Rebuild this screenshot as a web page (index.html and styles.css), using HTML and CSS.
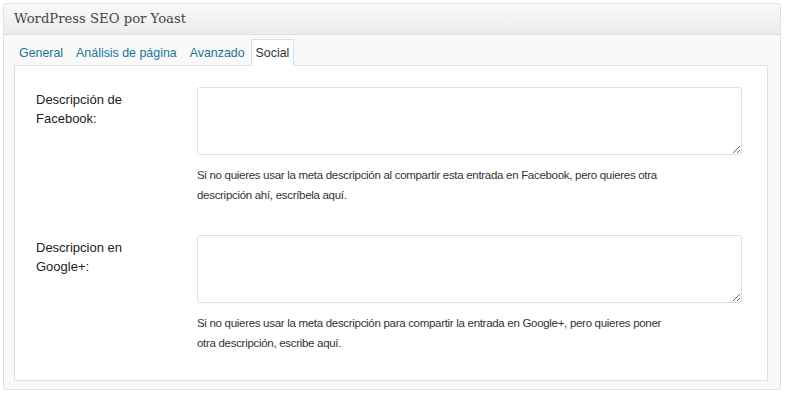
FILE: index.html
```html
<!DOCTYPE html>
<html lang="es">
<head>
<meta charset="utf-8">
<title>WordPress SEO por Yoast</title>
<link rel="stylesheet" href="styles.css">
</head>
<body>
<div class="postbox">
  <h3 class="hndle">WordPress SEO por Yoast</h3>
  <div class="inside">
    <ul class="tabs">
      <li class="tab"><a href="#">General</a></li>
      <li class="tab"><a href="#">Análisis de página</a></li>
      <li class="tab"><a href="#">Avanzado</a></li>
      <li class="tab active"><a href="#">Social</a></li>
    </ul>
    <div class="panel">
      <div class="row">
        <label class="label">Descripción de Facebook:</label>
        <div class="field">
          <textarea class="textarea"></textarea>
          <p class="desc">Si no quieres usar la meta descripción al compartir esta entrada en Facebook, pero quieres otra<br>descripción ahí, escríbela aquí.</p>
        </div>
      </div>
      <div class="row">
        <label class="label">Descripcion en Google+:</label>
        <div class="field">
          <textarea class="textarea"></textarea>
          <p class="desc">Si no quieres usar la meta descripción para compartir la entrada en Google+, pero quieres poner<br>otra descripción, escribe aquí.</p>
        </div>
      </div>
    </div>
  </div>
</div>
</body>
</html>
```

FILE: styles.css
```css
* { box-sizing: border-box; }
html, body { margin: 0; padding: 0; background: #fff; }
body {
  font-family: "Liberation Sans", Arial, sans-serif;
  font-size: 12px;
  color: #333;
}
.postbox {
  margin: 3px 0 0 3px;
  width: 778px;
  height: 387px;
  border: 1px solid #dfdfdf;
  border-radius: 3px;
  background: #f5f5f5;
  display: flex;
  flex-direction: column;
}
.hndle {
  flex: none;
  margin: 0;
  height: 31px;
  padding: 7px 10px 0;
  font-family: "DejaVu Serif", Georgia, serif;
  font-weight: normal;
  font-size: 13.2px;
  line-height: 16px;
  color: #464646;
  background: linear-gradient(to bottom, #f9f9f9, #ececec);
  border-bottom: 1px solid #dfdfdf;
}
.inside {
  flex: 1;
  min-height: 0;
  padding: 4px 12px 8px 10px;
  display: flex;
  flex-direction: column;
  background: #f9f9f9;
}
.tabs {
  flex: none;
  list-style: none;
  margin: 0;
  padding: 0;
  display: flex;
  height: 26px;
}
.tab {
  margin-right: 3px;
  padding: 6px 4px 0;
  border: 1px solid transparent;
  border-bottom: 0;
  line-height: 15px;
  font-size: 12.4px;
}
.tab a {
  color: #21759b;
  text-decoration: none;
}
.tab.active {
  margin-left: -2px;
  background: #fff;
  border-color: #dfdfdf;
  margin-bottom: -1px;
  height: 27px;
  position: relative;
  z-index: 1;
}
.tab.active a { color: #333; }
.panel {
  flex: 1;
  min-height: 0;
  background: #fff;
  border: 1px solid #dfdfdf;
  padding: 21px 25px 0 21px;
}
.row {
  display: flex;
  margin-bottom: 30px;
}
.row:last-child { margin-bottom: 0; }
.label {
  width: 161px;
  flex: none;
  padding: 3px 50px 0 0;
  line-height: 19px;
  font-size: 13px;
  color: #222;
}
.field { flex: 1; }
.textarea {
  display: block;
  width: 545px;
  height: 68px;
  margin: 0;
  border: 1px solid #dfdfdf;
  border-radius: 3px;
  background: #fff;
  font: inherit;
}
.desc {
  margin: 10px 0 0;
  line-height: 20px;
  font-size: 11.5px;
  letter-spacing: -0.3px;
  color: #333;
}
```
